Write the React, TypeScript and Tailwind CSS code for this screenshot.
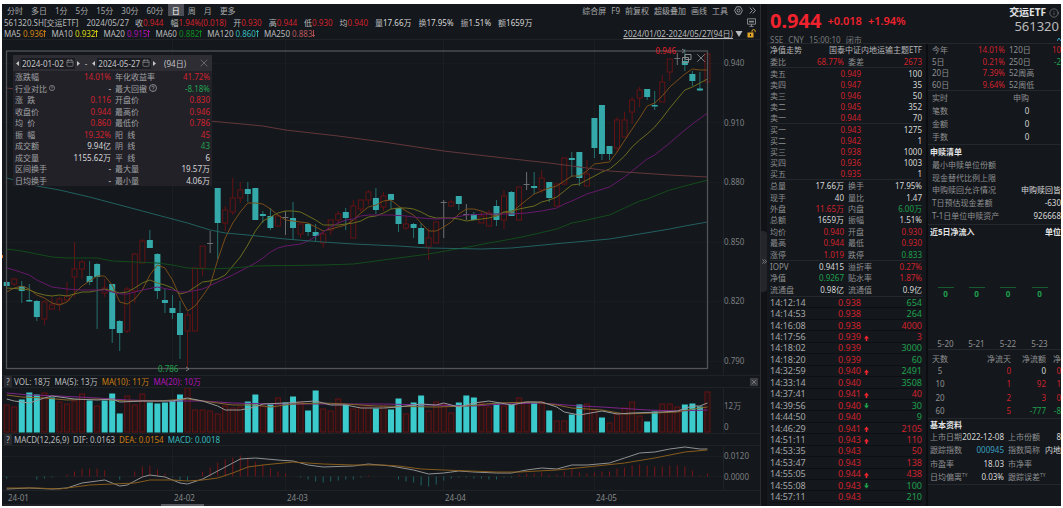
import React from 'react';
import { Calendar, Info, X } from 'lucide-react';

const RED = 'text-[#cf222d]';
const GREEN = 'text-[#1fa04e]';
const WHITE = 'text-[#d6d7d8]';
const GRAY = 'text-[#8e9092]';

// Horizontal position of a trading day in the chart
const dayX = (i: number) => 6.7 + i * 7.535;

// kind (u = up, d = down, f = flat), high, body top, body bottom, low
type Candle = [string, number, number, number, number];

const candles: Candle[] = [
  ['d', 281, 282, 286, 286], ['u', 278, 279, 284, 286], ['d', 281, 286, 291, 303], ['d', 284, 300, 301.5, 302],
  ['d', 300, 301, 317, 321], ['u', 300, 302, 319, 325], ['u', 297, 305, 309, 309], ['u', 297, 299, 304, 311],
  ['u', 282, 296, 300, 301], ['u', 242, 269, 277, 297], ['u', 260, 262, 269, 279], ['d', 261, 276, 282, 285],
  ['d', 263, 264, 277, 329], ['u', 279, 288, 293, 297], ['d', 284, 284, 329, 343], ['d', 320, 321, 333, 351],
  ['u', 287, 289, 331, 333], ['u', 253, 254, 291, 303], ['u', 239, 241, 263, 263], ['d', 230, 240, 248, 248],
  ['d', 253, 254, 291, 299], ['d', 289, 300, 303, 313], ['d', 295, 308, 313, 319], ['d', 301, 313, 335, 359],
  ['u', 312, 315, 331, 369], ['u', 268, 268, 331, 331], ['u', 246, 246, 268, 276], ['f', 231, 243.5, 243.5, 253],
  ['d', 188, 188, 223, 259], ['u', 206, 210, 223, 231], ['u', 178, 198, 212, 215], ['u', 182, 190, 198, 203],
  ['d', 182, 189, 194, 202], ['d', 188, 188, 220, 220], ['d', 211, 214, 216, 223], ['d', 208, 216, 228, 230],
  ['u', 215, 216, 226, 227], ['f', 211, 217.5, 217.5, 235], ['d', 202, 218, 228, 239], ['u', 223, 224, 234, 238],
  ['d', 223, 224, 232, 236], ['d', 224, 232, 236, 241], ['u', 232, 234, 243, 248], ['u', 220, 220, 230, 235],
  ['u', 211, 214, 220, 224], ['d', 208, 212, 218, 230], ['u', 200, 206, 238, 238], ['u', 200, 200, 209, 212],
  ['u', 190, 192, 200, 205], ['d', 188, 198, 210, 214], ['u', 192, 196, 207, 211], ['d', 194, 194, 200, 209],
  ['d', 208, 208, 224, 232], ['u', 216, 224, 228, 230], ['d', 223, 224, 228, 238], ['d', 223, 228, 244, 244],
  ['u', 228, 238, 247, 260], ['u', 222, 222, 243, 243], ['f', 200, 202.5, 202.5, 238], ['u', 200, 202, 206, 207],
  ['d', 196, 196, 204, 210], ['f', 204, 214.5, 214.5, 220], ['d', 212, 214, 220, 220], ['u', 212, 216, 223, 223],
  ['u', 210, 213, 226, 226], ['d', 200, 206, 220, 226], ['u', 190, 196, 220, 229], ['d', 191, 192, 216, 216],
  ['u', 187, 187, 220, 220], ['f', 172, 184.5, 184.5, 190], ['d', 172, 186, 188, 194], ['u', 170, 178, 190, 193],
  ['d', 182, 182, 198, 202], ['u', 184, 184, 206, 206], ['u', 158, 158, 184, 185], ['d', 152, 158, 160, 177],
  ['d', 152, 152, 178, 186], ['u', 160, 174, 186, 186], ['d', 118, 118, 148, 158], ['d', 105, 105, 154, 160],
  ['d', 146, 146, 154, 160], ['u', 117, 120, 148, 152], ['u', 112, 120, 137, 137], ['u', 97, 100, 112, 124],
  ['u', 87, 90, 98, 107], ['d', 89, 89, 97, 100], ['d', 91, 105, 106.5, 110], ['u', 75, 82, 102, 102],
  ['u', 59, 59, 72, 81], ['f', 53, 58.5, 58.5, 65], ['d', 49, 61, 65, 71], ['d', 71, 74, 81, 86],
  ['d', 72, 88.5, 90.5, 91], ['u', 54, 54, 82, 82],
];

// Bar heights; a negative value is a falling day
const volumes = [
  27, 25, -33, -40, -38, 39, -35, 30, 28, 31, 38, -32, 26, -32, -39, -19, 36, 27, 38, -30, -29, -30, -32, -38, 44,
  22, 22, 21, 18, 26, 24, 25, -31, -38, 26, -28, 34, -30, -36, 30, -22, -42, 23, 21, 33, -28, 23, 25, 26, -24, 26,
  -23, -34, 18, -30, -37, 21, 30, 28, 19, -30, -37, -35, 29, 25, -29, 26, -28, 34, 30, -30, 30, -22, 11, 11, -18,
  -28, 28, 22, -15, 9, 18, 24, 30, 16, -11, -21, 28, 28, 25, -28, -29, -26, 40,
];

const macdBars = [
  -2, 0, 0, 0, -3, -2, -1, 0, 2, 5, 8, 8, 8, 6, 0, -3, 0, 5, 10, 11, 7, 3, -1, -5, -5, 0, 5, 9, 14, 17, 19, 21, 19,
  15, 12, 8, 5, 3, 0, -1, -3, -5, -6, -5, -4, -3, -3, -1, 1, 0, 0, 0, -3, -5, -6, -9, -10, -8, -4, -2, -1, -1, -2,
  -2, -3, -3, -1, -1, 2, 3, 3, 4, 2, 2, 5, 7, 4, 3, 4, 5, 5, 8, 9, 11, 12, 11, 10, 10, 11, 11, 10, 6, 1, 3,
];

// Curves are written as "day:y" pairs
const priceLines = [
  {
    color: '#794d19',
    data: '0:292 1:288 2:286 3:289 4:295 5:298 6:303 7:305 8:302 9:293 10:286 11:281 12:276 13:276 14:285 15:302 16:304 17:299 18:290 19:275 20:265 21:268 22:280 23:297 24:311 25:306 26:296 27:285 28:260 29:238 30:223 31:212 32:203 33:203 34:204 35:209 36:215 37:220 38:221 39:222 40:223 41:227 42:231 43:229 44:227 45:225 46:220 47:213 48:207 49:205 50:201 51:200 52:206 53:211 54:215 55:223 56:231 57:231 58:227 59:222 60:214 61:209 62:209 63:211 64:214 65:216 66:212 67:213 68:206 69:200 70:194 71:191 72:188 73:186 74:181 75:176 76:176 77:171 78:164 79:163 80:162 81:152 83:129 84:118 85:106 86:103 87:96 88:87 90:74 91:69 92:70 93:70',
  },
  {
    color: '#6b6c1f',
    data: '0:288 2:289 3:290 4:293 5:295 6:296 7:295 8:296 9:294 10:292 11:292 13:289 14:291 15:293 16:292 17:288 18:283 19:280 20:283 21:285 22:288 23:294 24:292 25:287 26:282 27:281 28:279 29:275 30:266 31:257 32:245 33:231 34:221 35:217 36:213 37:211 38:211 39:212 40:216 41:220 42:225 44:225 46:223 47:221 48:217 49:216 50:213 51:209 52:208 53:208 54:209 55:212 56:216 57:218 59:218 60:219 61:221 62:220 63:219 64:218 65:216 66:212 67:211 68:209 70:206 71:202 72:200 73:197 74:191 75:185 76:184 77:180 78:176 79:172 80:169 81:163 82:156 83:147 84:140 85:134 86:127 87:118 88:108 89:99 90:90 91:87 92:83 93:79',
  },
  {
    color: '#66196b',
    data: '0:268 1:270 3:275 4:280 6:287 8:289 10:290 13:290 15:294 16:294 18:290 20:287 22:290 23:292 24:292 26:289 28:282 30:275 32:267 33:263 34:258 35:252 36:248 37:246 39:244 40:241 42:232 43:227 44:223 45:220 46:219 47:216 48:215 51:215 53:216 55:218 57:219 59:218 61:215 64:214 67:214 69:213 71:211 73:208 74:204 75:201 77:194 80:187 82:177 84:165 85:159 86:155 88:143 90:130 91:124 93:113',
  },
  {
    color: '#134b1b',
    data: '0:249 2:251 4:254 6:257 8:258 10:258 12:258 14:261 17:262 20:263 22:265 24:268 27:269 30:268 33:266 42:265 46:264 48:262 50:260 53:257 56:254 59:250 62:246 64:243 67:239 69:236 73:229 75:223 77:220 80:215 82:208 84:201 85:199 88:190 90:186 93:180',
  },
  {
    color: '#22605f',
    data: '0:178 4:186 7:190 11:197 14:203 18:211 21:217 24:223 27:230 29:233 32:235 37:239 42:242 46:244 52:246 56:248 63:249 67:248 74:243 80:239 84:234 88:229 90:226 93:222',
  },
  {
    color: '#63373a',
    data: '0:88 2:90 27:121 34:126 37:130 44:136 50:142 58:151 66:158 72:163 80:171 88:175 93:177',
  },
];

const volumeLines = [
  { color: '#7b2589', data: '0:393 3:395 7:396 12:398 16:400 20:401 26:401 30:403 36:404 50:404 62:406 66:404 71:403 76:406 79:407 85:410 89:411 93:410' },
  { color: '#85652b', data: '0:395 2:397 5:398 8:400 12:399 16:401 20:401 24:399 27:402 30:405 33:405 35:407 38:404 42:403 45:404 49:406 57:407 61:406 65:403 70:402 73:405 75:408 79:410 82:414 86:413 89:412 91:409 93:407' },
  { color: '#969899', data: '0:399 1:401 2:402 3:403 5:398 6:396 9:399 12:400 14:399 15:402 18:401 22:401 24:398 26:401 28:406 29:410 31:410 33:407 34:404 37:403 39:402 41:401 43:405 45:405 47:408 50:408 52:407 55:404 57:405 58:403 60:407 62:403 64:401 67:405 69:402 71:402 73:407 74:412 76:415 79:411 81:414 83:413 87:412 89:411 91:406 92:406 93:403' },
];

const macdLines = [
  { color: '#8f9192', data: '0:489 3:488 6:489 8:488 10:483 12:481 13:480 15:486 16:485 18:477 19:475 21:477 23:483 24:484 26:479 28:471 30:463 31:459 33:458 36:460 38:461 40:465 42:467 46:466 48:464 51:466 54:470 56:474 58:473 60:471 62:472 65:473 67:473 69:470 71:468 73:469 75:465 77:465 80:463 82:458 84:453 86:452 88:449 90:447 92:449 93:449' },
  { color: '#855b1b', data: '0:488 4:488 7:489 9:487 11:485 14:484 17:483 19:480 22:480 24:481 26:480 28:478 30:473 32:467 34:465 38:462 42:464 46:465 50:465 52:466 55:469 58:470 65:472 68:472 73:470 77:467 82:463 86:458 90:452 93:450' },
];

const toPoints = (data: string) =>
  data
    .split(' ')
    .map((pair) => pair.split(':').map(Number))
    .map(([day, y]) => `${dayX(day)},${y}`)
    .join(' ');

const Curves: React.FC<{ lines: { color: string; data: string }[] }> = ({ lines }) => (
  <>
    {lines.map((line) => (
      <polyline key={line.color} points={toPoints(line.data)} fill="none" stroke={line.color} strokeWidth="1" />
    ))}
  </>
);

const MONTH_LINES = [172.5, 285.5, 443.5, 594.5];

const MonthLines: React.FC<{ top: number; bottom: number }> = ({ top, bottom }) => (
  <>
    {MONTH_LINES.map((x) => (
      <line key={x} x1={x} x2={x} y1={top} y2={bottom} stroke="#1b1f22" />
    ))}
  </>
);

const PriceChart = () => (
  <svg className="block h-full w-full" viewBox="2 40 721 335" preserveAspectRatio="none">
    <MonthLines top={40} bottom={375} />
    {[63.5, 122.5, 182.5, 242.5, 301.5, 361.5].map((y) => (
      <line key={y} x1="2" x2="723" y1={y} y2={y} stroke="#181c1f" />
    ))}
    {candles.map(([kind, high, top, bottom, low], i) => {
      const x = dayX(i);
      if (kind === 'f') {
        return <path key={i} d={`M${x} ${high}V${low}M${x - 3} ${top}h6`} stroke="#6d7072" fill="none" />;
      }
      if (kind === 'd') {
        return (
          <g key={i}>
            <path d={`M${x} ${high}V${low}`} stroke="#23706f" />
            <rect x={x - 3} y={top} width="6" height={bottom - top} fill="#35a8a9" />
          </g>
        );
      }
      return (
        <g key={i} stroke="#651315" fill="none">
          <path d={`M${x} ${high}V${top}M${x} ${bottom}V${low}`} />
          <rect x={x - 2.5} y={top} width="5" height={bottom - top} />
        </g>
      );
    })}
    <Curves lines={priceLines} />
    <rect x="6.5" y="51" width="701" height="317.5" fill="none" stroke="#525457" strokeWidth="1.3" />
    <path d="M682 49l3 2-3 2M186 367l3 2-3 2" fill="none" stroke="#7a7c7e" />
    <path d="M2 255h1v3h-1z" fill="#e06a1b" />
  </svg>
);

const VolumeChart = () => (
  <svg className="block h-full w-full" viewBox="2 388 721 45" preserveAspectRatio="none">
    <MonthLines top={388} bottom={433} />
    {volumes.map((v, i) =>
      v < 0 ? (
        <rect key={i} x={dayX(i) - 3} y={432.5 + v} width="6" height={-v} fill="#3ccbcc" />
      ) : (
        <rect key={i} x={dayX(i) - 2.5} y={432 - v} width="5" height={v} fill="#241416" stroke="#651315" />
      ),
    )}
    <Curves lines={volumeLines} />
  </svg>
);

const MacdChart = () => (
  <svg className="block h-full w-full" viewBox="2 446 721 44" preserveAspectRatio="none">
    <MonthLines top={446} bottom={490} />
    <path d="M2 456.5H723M2 476.5H723" stroke="#1b1f22" />
    {macdBars.map((v, i) => (
      <line key={i} x1={dayX(i)} x2={dayX(i)} y1="476.5" y2={476.5 - v} stroke={v < 0 ? '#1e6262' : '#771519'} />
    ))}
    <Curves lines={macdLines} />
  </svg>
);

const Arrow: React.FC<{ down?: boolean }> = ({ down }) => (
  <svg className="h-[7px] w-[3px]" viewBox="0 0 3 7" fill="none" stroke="currentColor" strokeWidth="0.9">
    <path d={down ? 'M1.5 0V6.5M0 4.8l1.5 1.8L3 4.8' : 'M1.5 7V.5M0 2.2L1.5.4 3 2.2'} />
  </svg>
);

const TickArrow: React.FC<{ down?: boolean }> = ({ down }) => (
  <svg className={`ml-[3px] inline h-[6px] w-[5px] ${down ? GREEN : 'text-[#f5242f]'}`} viewBox="0 0 5 6" fill="currentColor">
    <path d={down ? 'M1.7 0h1.6v2.6H5L2.5 5.6 0 2.6h1.7z' : 'M1.7 6h1.6V3.4H5L2.5.4 0 3.4h1.7z'} />
  </svg>
);

const periods = ['分时', '多日', '1分', '5分', '15分', '30分', '60分', '日', '周', '月', '更多'];
const tools = ['综合屏', 'F9', '前复权', '超级叠加', '画线', '工具'];

const Toolbar = () => (
  <div className="flex h-3 items-center justify-between pr-1 pl-[5px] text-[#a5a7a9]">
    <div className="flex items-center gap-2">
      {periods.map((p) => (
        <button key={p} className={p === '日' ? '-mx-1 h-3 bg-[#4e4f56] px-1 text-white' : ''}>
          {p}
        </button>
      ))}
    </div>
    <div className="flex items-center gap-[5px]">
      {tools.map((t) => (
        <button key={t}>{t}</button>
      ))}
      <button aria-label="设置" className="ml-px">
        <svg className="h-[9px] w-[9px]" viewBox="0 0 9 9" fill="none" stroke="currentColor" strokeWidth="0.9">
          <path d="M2.6.8h3.8l2 3.7-2 3.7H2.6L.6 4.5z" />
          <circle cx="4.5" cy="4.5" r="1.5" />
        </svg>
      </button>
      <button aria-label="展开" className="ml-px">
        <svg className="h-[7px] w-[7px]" viewBox="0 0 7 7" fill="none" stroke="currentColor" strokeWidth="0.9">
          <path d="M.8.6l2.6 2.9L.8 6.4M3.8.6l2.6 2.9-2.6 2.9" />
        </svg>
      </button>
    </div>
  </div>
);

const quote = [
  ['收', '0.944', RED],
  ['幅', '1.94%(0.018)', RED],
  ['开', '0.930', RED],
  ['高', '0.944', RED],
  ['低', '0.930', RED],
  ['均', '0.940', RED],
  ['量', '17.66万', WHITE],
  ['换', '17.95%', WHITE],
  ['振', '1.51%', WHITE],
  ['额', '1659万', WHITE],
];

const QuoteLine = () => (
  <div className="flex h-3 items-center pr-1 pl-[2px] text-[#b9bbbd]">
    <span>561320.SH[交运ETF]</span>
    <span className="ml-2">2024/05/27</span>
    <div className="ml-[6px] flex gap-[7px]">
      {quote.map(([label, value, color]) => (
        <span key={label}>
          {label}
          <span className={color}>{value}</span>
        </span>
      ))}
    </div>
    <svg className="ml-auto h-[9px] w-[9px] text-[#8e9092]" viewBox="0 0 9 9" fill="none" stroke="currentColor" strokeWidth="0.9">
      <path d="M.5.8h8v5.4h-8zM2 3.5h5M2.5 8.4h4M4.5 6.2v2" />
      <path d="M2 2.8h5v1.6H2z" fill="currentColor" stroke="none" />
    </svg>
  </div>
);

const averages = [
  { name: 'MA5', value: '0.936', color: 'text-[#d18312]' },
  { name: 'MA10', value: '0.932', color: 'text-[#d9d914]' },
  { name: 'MA20', value: '0.915', color: 'text-[#ab14b3]' },
  { name: 'MA60', value: '0.882', color: 'text-[#0f8a23]' },
  { name: 'MA120', value: '0.860', color: 'text-[#35b9bb]' },
  { name: 'MA250', value: '0.883', color: 'text-[#b8585e]', down: true },
];

const AverageLine = () => (
  <div className="flex h-3 items-center border-b border-[#1f2326] pr-1 pl-[2px] text-[#b9bbbd]">
    <div className="flex gap-[5px]">
      {averages.map((a) => (
        <span key={a.name} className="flex items-center gap-[2px]">
          {a.name}
          <span className={`flex items-center ${a.color}`}>
            {a.value}
            <Arrow down={a.down} />
          </span>
        </span>
      ))}
    </div>
    <button className="ml-auto flex items-center gap-[2px]">
      <span className="underline underline-offset-1">2024/01/02-2024/05/27(94日)</span>
      <svg className="h-[6px] w-[8px]" viewBox="0 0 8 6" fill="#b9bbbd">
        <path d="M.5 0h7L4 6z" />
      </svg>
    </button>
    <svg className="ml-1 h-[9px] w-[9px]" viewBox="0 0 9 9" fill="none">
      <path d="M.5 3.5h6v5h-6z" fill="#e0a526" />
      <path d="M5 3.5V2.2a1.6 1.6 0 0 1 3.2 0v1" stroke="#e0a526" />
      <path d="M3.5 5v2" stroke="#14171b" />
    </svg>
  </div>
);

const Help = () => (
  <svg className="ml-[2px] h-2 w-2" viewBox="0 0 8 8" fill="none" stroke="currentColor" strokeWidth="0.8">
    <circle cx="4" cy="4" r="3.5" />
    <path d="M2.9 3.2a1.1 1.1 0 1 1 1.6 1q-.5.3-.5.8M4 5.7v.7" />
  </svg>
);

const DateStepper: React.FC<{ value: string }> = ({ value }) => (
  <span className="flex items-center gap-[2px]">
    <button aria-label="前一天">
      <svg className="h-[5px] w-[3px]" viewBox="0 0 3 5" fill="currentColor">
        <path d="M3 0v5L0 2.5z" />
      </svg>
    </button>
    <button className="flex items-center gap-[2px] bg-[#1c1d22] px-px">
      {value}
      <Calendar size={8} strokeWidth={2} className="text-[#8e9092]" />
    </button>
    <button aria-label="后一天">
      <svg className="h-[5px] w-[3px]" viewBox="0 0 3 5" fill="currentColor">
        <path d="M0 0v5l3-2.5z" />
      </svg>
    </button>
  </span>
);

const rangeStats = [
  ['涨跌幅', '14.01%', RED, '年化收益率', '41.72%', RED],
  ['行业对比', '-', WHITE, '最大回撤', '-8.18%', GREEN],
  ['涨  跌', '0.116', RED, '开盘价', '0.830', RED],
  ['收盘价', '0.944', RED, '最高价', '0.946', RED],
  ['均  价', '0.860', RED, '最低价', '0.786', RED],
  ['振  幅', '19.32%', RED, '阳  线', '45', RED],
  ['成交额', '9.94亿', WHITE, '阴  线', '43', GREEN],
  ['成交量', '1155.62万', WHITE, '平  线', '6', WHITE],
  ['区间换手', '-', WHITE, '最大量', '19.57万', WHITE],
  ['日均换手', '-', WHITE, '最小量', '4.06万', WHITE],
];

const RangePanel = () => (
  <div className="absolute top-[15px] left-[11px] w-[199px] bg-[#222128]">
    <div className="flex h-4 items-center bg-[#2d2d33] pr-[2px] pl-[3px] text-[#c3c4c6]">
      <DateStepper value="2024-01-02" />
      <span className="mx-[5px]">-</span>
      <DateStepper value="2024-05-27" />
      <span className="ml-2">(94日)</span>
      <button aria-label="关闭" className="ml-auto">
        <X size={12} strokeWidth={1.5} className="text-[#77797b]" />
      </button>
    </div>
    <div className="grid h-[115px] auto-rows-fr">
      {rangeStats.map(([l1, v1, c1, l2, v2, c2]) => (
        <div key={l1} className="grid grid-cols-[40px_56px_50px_1fr] items-center px-[2px] whitespace-pre">
          <span className="flex items-center text-[#a0a1a4]">
            {l1}
            {l1 === '行业对比' && <Help />}
          </span>
          <span className={`text-right ${c1}`}>{v1}</span>
          <span className="flex items-center pl-1 text-[#a0a1a4]">
            {l2}
            {l2 === '最大回撤' && <Help />}
          </span>
          <span className={`text-right ${c2}`}>{v2}</span>
        </div>
      ))}
    </div>
  </div>
);

const Axis: React.FC<{ className: string; labels: string[] }> = ({ className, labels }) => (
  <div className={`flex w-[37px] shrink-0 flex-col justify-between border-l border-[#1f2326] text-[#7d7f82] ${className}`}>
    {labels.map((label) => (
      <span key={label} className="h-3 leading-3">
        {label}
      </span>
    ))}
  </div>
);

const IndicatorTitle: React.FC<{ children: React.ReactNode }> = ({ children }) => (
  <div className="flex h-[13px] items-center gap-1 border-y border-[#1f2326] px-[2px] text-[#b9bbbd]">
    <button className="-mr-[2px] h-[11px] w-2 bg-[#2a2b30] leading-none">?</button>
    {children}
  </div>
);

const ChartArea = () => (
  <main className="flex min-w-0 flex-1 flex-col">
    <Toolbar />
    <QuoteLine />
    <AverageLine />
    <div className="flex min-h-0 flex-1">
      <div className="relative min-w-0 flex-1">
        <PriceChart />
        <RangePanel />
        <span className="absolute top-[5px] right-[47px] leading-3 text-[#e0202c]">0.946</span>
        <span className="absolute bottom-0 left-[156px] leading-3 text-[#1fa04e]">0.786</span>
        <div className="absolute top-[11px] right-[15px] flex items-center gap-[2px] text-[#8b8d8f]">
          <button aria-label="还原">
            <svg className="h-[9px] w-[10px]" viewBox="0 0 10 9" fill="none" stroke="currentColor">
              <path d="M3 .5h6v5H3zM.5 3.5h6v5h-6z" />
            </svg>
          </button>
          <button aria-label="关闭">
            <X size={14} strokeWidth={1.5} />
          </button>
        </div>
      </div>
      <Axis className="pt-[17px] pb-2" labels={['0.940', '0.910', '0.880', '0.850', '0.820', '0.790']} />
    </div>
    <IndicatorTitle>
      <span>VOL: 18万</span>
      <span>MA(5): 13万</span>
      <span className="text-[#c87d12]">MA(10): 11万</span>
      <span className="text-[#b015b8]">MA(20): 10万</span>
      <button aria-label="关闭指标" className="ml-auto bg-[#3a3b3f] text-[#8e9092]">
        <X size={8} />
      </button>
    </IndicatorTitle>
    <div className="flex h-[45px]">
      <div className="min-w-0 flex-1">
        <VolumeChart />
      </div>
      <Axis className="pt-3" labels={['12万', '0']} />
    </div>
    <IndicatorTitle>
      <span>MACD(12,26,9)</span>
      <span>DIF: 0.0163</span>
      <span className="text-[#c87d12]">DEA: 0.0154</span>
      <span className="text-[#35b9bb]">MACD: 0.0018</span>
    </IndicatorTitle>
    <div className="flex h-11">
      <div className="min-w-0 flex-1">
        <MacdChart />
      </div>
      <Axis className="pt-1 pb-[7px]" labels={['0.0120', '0.0000']} />
    </div>
    <div className="grid h-[14px] grid-cols-[166fr_113fr_158fr_151fr_164fr] items-center border-t border-[#1f2326] pl-[6px] text-[#85878a]">
      {['24-01', '24-02', '24-03', '24-04', '24-05'].map((m) => (
        <span key={m}>{m}</span>
      ))}
    </div>
    <div className="h-[2px] bg-[#202125] pl-[21%]">
      <div className="h-full w-[43px] bg-[#5c5e62]" />
    </div>
  </main>
);

const Splitter = () => (
  <div className="flex w-[7px] shrink-0 flex-col border-l border-[#2c2d31] bg-[#101216]">
    <button aria-label="收起" className="mt-[227px] flex h-[61px] items-center justify-center rounded-r-sm bg-[#25262b] text-[#8e9092]">
      <svg className="h-[5px] w-[5px]" viewBox="0 0 5 5" fill="none" stroke="currentColor" strokeWidth="0.8">
        <path d="M.4.4l1.9 2.1L.4 4.6M2.6.4l1.9 2.1-1.9 2.1" />
      </svg>
    </button>
  </div>
);

const asks = [
  ['卖五', '0.949', '100'],
  ['卖四', '0.947', '35'],
  ['卖三', '0.946', '50'],
  ['卖二', '0.945', '352'],
  ['卖一', '0.944', '70'],
];

const bids = [
  ['买一', '0.943', '1275'],
  ['买二', '0.942', '1'],
  ['买三', '0.938', '1000'],
  ['买四', '0.936', '1003'],
  ['买五', '0.935', '1'],
];

const Book: React.FC<{ rows: string[][] }> = ({ rows }) => (
  <div className="grid h-14 auto-rows-fr border-t border-[#24272b]">
    {rows.map(([label, price, amount]) => (
      <div key={label} className="grid grid-cols-[50px_41px_1fr] items-center">
        <span className={GRAY}>{label}</span>
        <span className={`text-right ${RED}`}>{price}</span>
        <span className={`text-right ${WHITE}`}>{amount}</span>
      </div>
    ))}
  </div>
);

const dayStats = [
  ['总量', '17.66万', WHITE, '换手', '17.95%', WHITE],
  ['现手', '40', WHITE, '量比', '1.47', WHITE],
  ['外盘', '11.65万', RED, '内盘', '6.00万', GREEN],
  ['总额', '1659万', WHITE, '振幅', '1.51%', WHITE],
  ['均价', '0.940', RED, '开盘', '0.930', RED],
  ['最高', '0.944', RED, '最低', '0.930', RED],
  ['涨停', '1.019', RED, '跌停', '0.833', GREEN],
];

const fundStats = [
  ['IOPV', '0.9415', WHITE, '溢折率', '0.27%', RED],
  ['净值', '0.9267', GREEN, '贴水率', '1.87%', RED],
  ['流通盘', '0.98亿', WHITE, '流通值', '0.9亿', WHITE],
];

const PairRow: React.FC<{ row: string[] }> = ({ row: [l1, v1, c1, l2, v2, c2] }) => (
  <div className="grid grid-cols-[30px_44px_30px_1fr] items-center">
    <span className={GRAY}>{l1}</span>
    <span className={`text-right ${c1}`}>{v1}</span>
    <span className={`pl-1 ${GRAY}`}>{l2}</span>
    <span className={`text-right ${c2}`}>{v2}</span>
  </div>
);

// time, price, direction, lots, side
const ticks = [
  ['14:12:14', '0.938', '', '654', GREEN],
  ['14:14:53', '0.938', '', '264', GREEN],
  ['14:16:08', '0.938', '', '4000', RED],
  ['14:17:56', '0.939', 'up', '3', RED],
  ['14:18:02', '0.939', '', '3000', GREEN],
  ['14:18:20', '0.939', '', '60', GREEN],
  ['14:32:59', '0.940', 'up', '2491', GREEN],
  ['14:33:14', '0.940', '', '3508', GREEN],
  ['14:37:41', '0.941', 'up', '40', RED],
  ['14:39:56', '0.940', 'down', '30', GREEN],
  ['14:44:50', '0.940', '', '9', GREEN],
  ['14:46:29', '0.941', 'up', '2105', RED],
  ['14:51:11', '0.943', 'up', '110', RED],
  ['14:53:35', '0.943', '', '50', RED],
  ['14:53:47', '0.943', '', '138', RED],
  ['14:55:05', '0.944', 'up', '438', RED],
  ['14:55:08', '0.943', 'down', '100', GREEN],
  ['14:57:11', '0.943', '', '210', GREEN],
];

const QuoteColumn = () => (
  <div className="flex w-[159px] shrink-0 flex-col overflow-hidden pr-1 pl-[3px]">
    <div className="grid h-[23px] auto-rows-fr">
      <div className="flex items-center justify-between text-[#b4b6b8]">
        <span>净值走势</span>
        <span>国泰中证内地运输主题ETF</span>
      </div>
      <PairRow row={['委比', '68.77%', RED, '委差', '2673', RED]} />
    </div>
    <Book rows={asks} />
    <Book rows={bids} />
    <div className="grid h-[81px] auto-rows-fr border-t border-[#24272b]">
      {dayStats.map((row) => (
        <PairRow key={row[0]} row={row} />
      ))}
    </div>
    <div className="grid h-[35px] auto-rows-fr border-t border-[#24272b]">
      {fundStats.map((row) => (
        <PairRow key={row[0]} row={row} />
      ))}
    </div>
    <table className="mt-px h-[207px] w-full border-t border-[#24272b] text-[9px] leading-[9px]">
      <tbody>
        {ticks.map(([time, price, dir, lots, side]) => (
          <tr key={time} className="border-b border-[#0d0f12]">
            <td className="w-[68px] p-0 text-[#a3a5a7]">{time}</td>
            <td className={`p-0 whitespace-nowrap ${RED}`}>
              {price}
              {dir && <TickArrow down={dir === 'down'} />}
            </td>
            <td className={`p-0 text-right ${side}`}>{lots}</td>
          </tr>
        ))}
      </tbody>
    </table>
  </div>
);

const returns = [
  ['今年', '14.01%', '120日', '10', RED],
  ['5日', '0.21%', '250日', '-2', GREEN],
  ['20日', '7.39%', '52周高', '', WHITE],
  ['60日', '9.64%', '52周低', '', WHITE],
];

const redemption = [
  ['最小申赎单位份额', ''],
  ['现金替代比例上限', ''],
  ['申购赎回允许情况', '申购赎回皆'],
  ['T日预估现金差额', '-630'],
  ['T-1日单位申赎资产', '926668'],
];

const netFlow = [
  ['5', '0', RED, '0', WHITE, '0', RED],
  ['10', '1', RED, '92', RED, '1', RED],
  ['20', '2', RED, '3', RED, '0', RED],
  ['60', '5', RED, '-777', GREEN, '-8', GREEN],
];

const profile = [
  ['上市日期', '2022-12-08', WHITE, '上市份额', '8', 'text-right'],
  ['跟踪指数', '000945', 'text-[#3a9fc0]', '指数简称', '内地', 'text-left'],
  ['市盈率', '18.03', WHITE, '市净率', '', ''],
  ['日均偏离', '0.03%', WHITE, '跟踪误差', '', ''],
];

const FundColumn = () => (
  <div className="w-[135px] shrink-0 overflow-hidden border-l-2 border-[#0b0d10] whitespace-nowrap">
    <div className="grid h-[46px] auto-rows-fr">
      {returns.map(([l1, v1, l2, v2, color]) => (
        <div key={l1} className="grid grid-cols-[30px_43px_47px_1fr] items-center pl-1">
          <span className={GRAY}>{l1}</span>
          <span className={`text-right ${RED}`}>{v1}</span>
          <span className={`pl-1 ${GRAY}`}>{l2}</span>
          <span className={`text-right ${color}`}>{v2}</span>
        </div>
      ))}
    </div>
    <div className="grid h-[54px] auto-rows-fr border-t border-[#24272b] pb-px pl-1">
      <div className={`grid grid-cols-[81px_1fr] items-center ${GRAY}`}>
        <span>实时</span>
        <span>申购</span>
      </div>
      {['笔数', '金额', '手数'].map((label) => (
        <div key={label} className="grid grid-cols-[81px_28px] items-center">
          <span className={GRAY}>{label}</span>
          <span className={`text-center ${WHITE}`}>0</span>
        </div>
      ))}
    </div>
    <div className="grid h-[80px] auto-rows-fr border-t border-[#24272b] pb-[2px]">
      <h2 className="flex items-center pl-[2px] font-bold text-[#e2e3e4]">申赎清单</h2>
      {redemption.map(([label, value]) => (
        <div key={label} className="flex items-center justify-between pl-1">
          <span className={GRAY}>{label}</span>
          <span className={WHITE}>{value}</span>
        </div>
      ))}
    </div>
    <div className="h-[125px] border-t border-[#24272b]">
      <div className="flex h-[13px] items-center justify-between pl-[2px] font-bold text-[#e2e3e4]">
        <h2>近5日净流入</h2>
        <span>单位</span>
      </div>
      <div className="grid h-[111px] grid-cols-[31px_31px_32px_31px] pt-[49px] pl-[2px]">
        {['5-20', '5-21', '5-22', '5-23'].map((day) => (
          <div key={day} className="flex flex-col items-center justify-between">
            <div className="flex flex-col items-center">
              <div className="h-px w-4 bg-[#175a30]" />
              <span className={`font-bold ${GREEN}`}>0</span>
            </div>
            <span className="text-[#8e9092]">{day}</span>
          </div>
        ))}
      </div>
    </div>
    <table className="h-[69px] w-full table-fixed border-t border-[#24272b] leading-[10px]">
      <thead>
        <tr className={GRAY}>
          <th className="w-[24px] p-0 pt-1 pl-1 text-left font-normal">天数</th>
          <th className="w-[59px] p-0 pt-1 text-right font-normal">净流天</th>
          <th className="w-[35px] p-0 pt-1 text-right font-normal">净流额</th>
          <th className="p-0 pt-1 text-right font-normal">净</th>
        </tr>
      </thead>
      <tbody>
        {netFlow.map(([days, a, ca, b, cb, c, cc]) => (
          <tr key={days}>
            <td className={`p-0 text-center ${GRAY}`}>{days}</td>
            <td className={`p-0 text-right ${ca}`}>{a}</td>
            <td className={`p-0 text-right ${cb}`}>{b}</td>
            <td className={`p-0 text-right ${cc}`}>{c}</td>
          </tr>
        ))}
      </tbody>
    </table>
    <div className="h-[67px] border-y border-[#24272b] pl-[2px]">
      <h2 className="h-[11px] leading-[11px] font-bold text-[#e2e3e4]">基本资料</h2>
      <div className="grid h-[53px] auto-rows-fr">
        {profile.map(([l1, v1, color, l2, v2, align]) => (
          <div key={l1} className="grid grid-cols-[24px_50px_41px_16px] items-center">
            <span className={GRAY}>
              {l1}
              {l1 === '日均偏离' && <sup className="text-[5px]">TY</sup>}
            </span>
            <span className="flex justify-end">
              <span className={`bg-[#14171b] ${color}`}>{v1}</span>
            </span>
            <span className={`pl-1 ${GRAY}`}>
              {l2}
              {l2 === '跟踪误差' && <sup className="text-[5px]">TY</sup>}
            </span>
            <span className={`${align} ${WHITE}`}>{v2}</span>
          </div>
        ))}
      </div>
    </div>
  </div>
);

const PriceHeader = () => (
  <header className="flex h-10 justify-between border-b border-[#24272b] pl-[3px]">
    <div>
      <div className="flex h-[29px] items-center pt-1 text-[11px] font-semibold text-[#f0222e]">
        <span className="text-[20px] leading-6 font-bold">0.944</span>
        <span className="ml-[6px]">+0.018</span>
        <span className="ml-[6px]">+1.94%</span>
      </div>
      <div className="flex h-[12px] items-center gap-[5px] text-[#77797c]">
        <span>SSE</span>
        <span>CNY</span>
        <span>15:00:10</span>
        <span>闭市</span>
      </div>
    </div>
    <div className="flex flex-col items-end pt-[2px] pr-[2px]">
      <div className="flex items-center gap-[3px] text-[10px] leading-[13px] font-bold text-[#e2e3e4]">
        交运ETF
        <Info size={10} strokeWidth={1.5} className="text-[#8e9092]" />
      </div>
      <span className="text-[13px] leading-[14px] text-[#b9bbbd]">561320</span>
      <svg className="-mr-[2px] mt-1 h-[5px] w-[4px]" viewBox="0 0 4 5" fill="none" stroke="#35a8c8">
        <path d="M0 4l2-3 2 3" />
      </svg>
    </div>
  </header>
);

export default function App() {
  return (
    <div className="h-screen bg-white px-[2px] pt-1 pb-[2px]">
      <div className="flex h-full overflow-hidden bg-[#14171b] font-['Noto_Sans','Noto_Sans_CJK_SC',sans-serif] text-[8px] leading-[11px]">
        <ChartArea />
        <Splitter />
        <aside className="flex shrink-0 flex-col overflow-hidden">
          <PriceHeader />
          <div className="flex min-h-0 flex-1">
            <QuoteColumn />
            <FundColumn />
          </div>
        </aside>
      </div>
    </div>
  );
}
